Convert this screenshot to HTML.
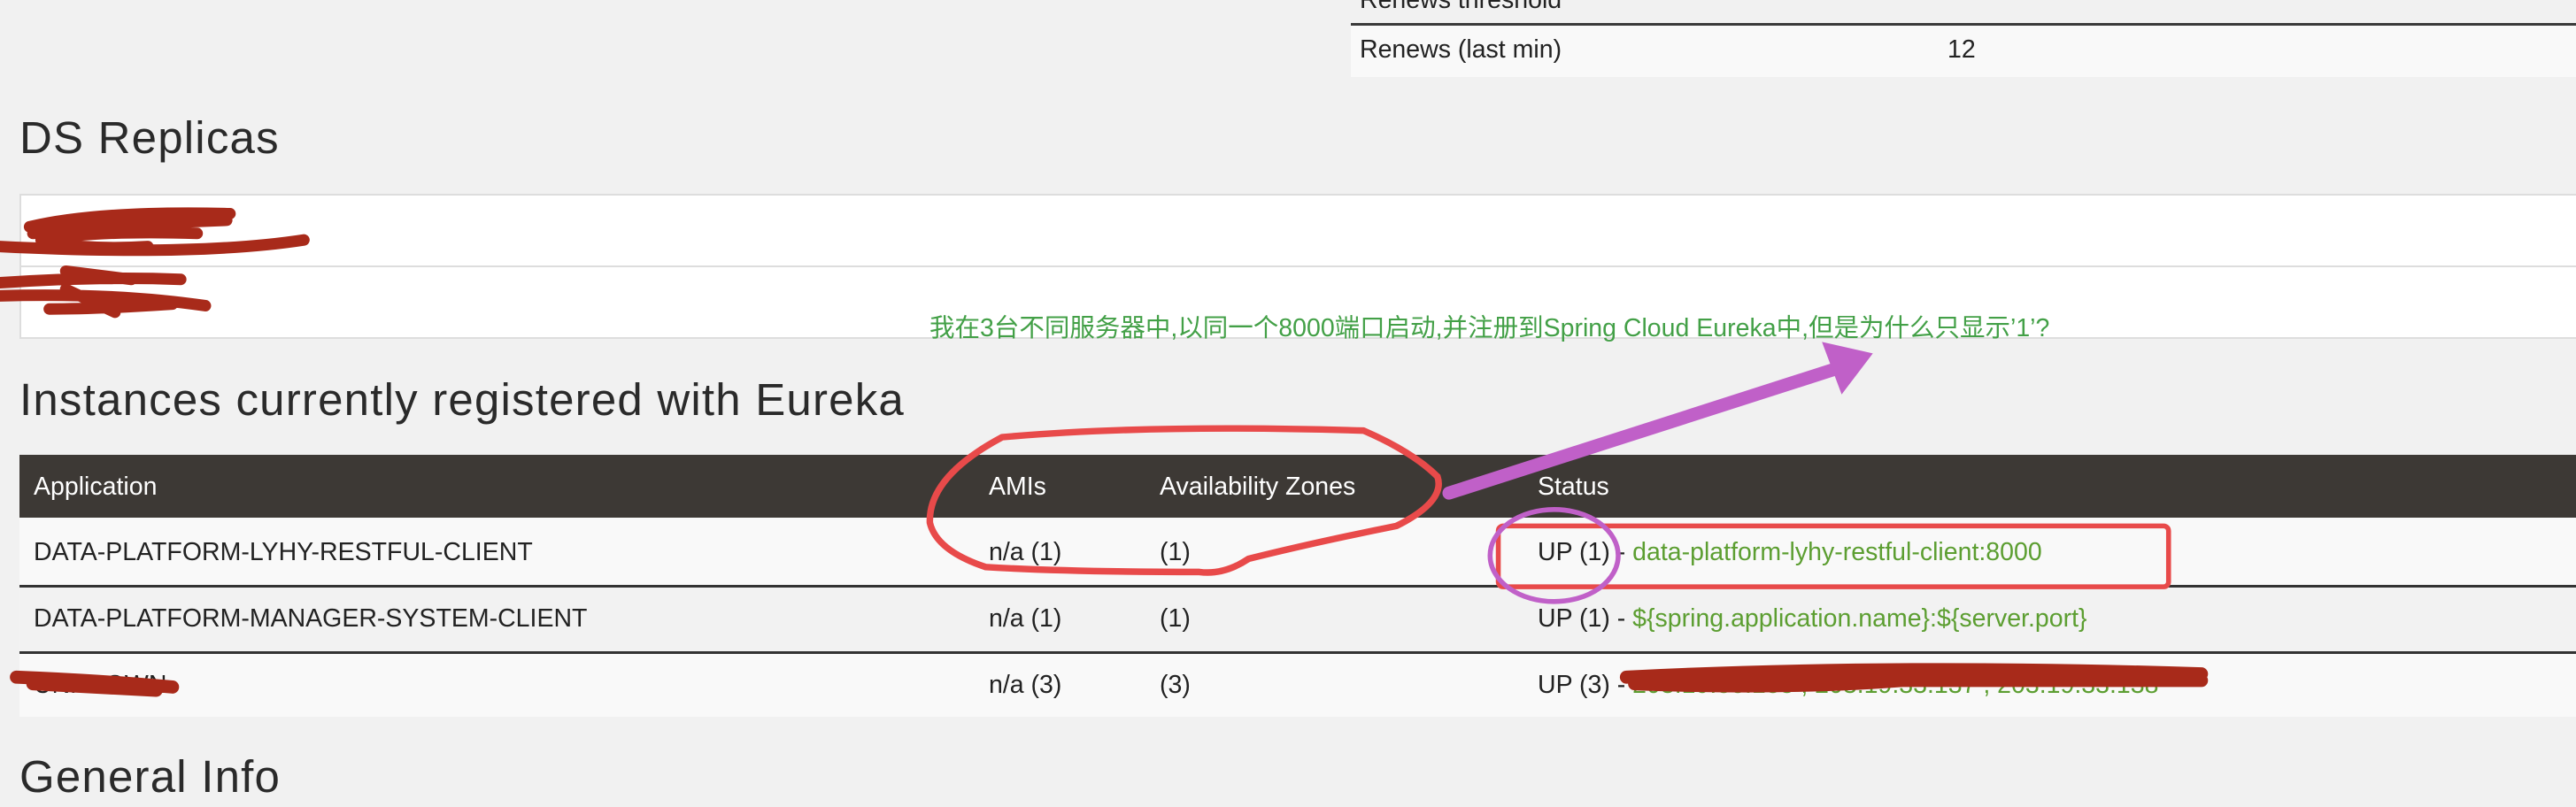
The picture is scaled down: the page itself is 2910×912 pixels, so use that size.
<!DOCTYPE html>
<html><head><meta charset="utf-8"><style>
html,body{margin:0;padding:0}
body{width:2910px;height:912px;background:#f1f1f1;position:relative;overflow:hidden;font-family:"Liberation Sans","Noto Sans CJK SC",sans-serif;color:#222}
.a{position:absolute;white-space:nowrap}
h{position:absolute;font-size:51px;letter-spacing:1.2px;color:#2a2a2a;white-space:nowrap}
.t{font-size:28.5px;line-height:28px}
.g{color:#5c9e31}
</style></head><body>
<div class="a" style="left:1526px;top:0;width:1384px;height:26px;border-bottom:3px solid #3a3a3a"></div>
<div class="a t" style="left:1536px;top:-14px">Renews threshold</div>
<div class="a" style="left:1526px;top:29px;width:1384px;height:58px;background:#f9f9f9"></div>
<div class="a t" style="left:1536px;top:42px">Renews (last min)</div>
<div class="a t" style="left:2200px;top:42px">12</div>

<h style="left:22px;top:126px">DS Replicas</h>
<div class="a" style="left:22px;top:219px;width:2890px;height:160px;background:#fff;border:2px solid #ddd;border-right:none"></div>
<div class="a" style="left:22px;top:300px;width:2890px;height:2px;background:#ddd"></div>
<div class="a" style="left:1050px;top:348px;font-size:28.5px;color:#43a047">我在3台不同服务器中,以同一个8000端口启动,并注册到Spring Cloud Eureka中,但是为什么只显示’1’?</div>

<h style="left:22px;top:422px">Instances currently registered with Eureka</h>
<div class="a" style="left:22px;top:514px;width:2890px;height:71px;background:#3d3935"></div>
<div class="a t" style="left:38px;top:536px;color:#fff">Application</div>
<div class="a t" style="left:1117px;top:536px;color:#fff">AMIs</div>
<div class="a t" style="left:1310px;top:536px;color:#fff">Availability Zones</div>
<div class="a t" style="left:1737px;top:536px;color:#fff">Status</div>

<div class="a" style="left:22px;top:585px;width:2890px;height:76px;background:#f9f9f9;border-bottom:3px solid #333"></div>
<div class="a t" style="left:38px;top:610px">DATA-PLATFORM-LYHY-RESTFUL-CLIENT</div>
<div class="a t" style="left:1117px;top:610px">n/a (1)</div>
<div class="a t" style="left:1310px;top:610px">(1)</div>
<div class="a t" style="left:1737px;top:610px">UP (1) - <span class="g">data-platform-lyhy-restful-client:8000</span></div>

<div class="a" style="left:22px;top:664px;width:2890px;height:72px;background:#f2f2f2;border-bottom:3px solid #333"></div>
<div class="a t" style="left:38px;top:685px">DATA-PLATFORM-MANAGER-SYSTEM-CLIENT</div>
<div class="a t" style="left:1117px;top:685px">n/a (1)</div>
<div class="a t" style="left:1310px;top:685px">(1)</div>
<div class="a t" style="left:1737px;top:685px">UP (1) - <span class="g">${spring.application.name}:${server.port}</span></div>

<div class="a" style="left:22px;top:739px;width:2890px;height:71px;background:#f9f9f9"></div>
<div class="a t" style="left:38px;top:760px">UNKNOWN</div>
<div class="a t" style="left:1117px;top:760px">n/a (3)</div>
<div class="a t" style="left:1310px;top:760px">(3)</div>
<div class="a t" style="left:1737px;top:760px">UP (3) - <span class="g">203.19.33.133 , 203.19.33.137 , 203.19.33.138</span></div>

<h style="left:22px;top:848px">General Info</h>

<svg class="a" style="left:0;top:0" width="2910" height="912" viewBox="0 0 1568 491" preserveAspectRatio="none">
<g fill="none" stroke-linecap="round">
<path d="M18 138 Q60 128 140 130 M20 142 Q80 136 138 134 M25 146 Q60 140 120 142 M0 150 Q120 156 185 146 M30 148 Q60 152 90 150" stroke="#a82a1a" stroke-width="7"/>
<path d="M40 165 L80 170 M0 172 Q60 168 110 170 M0 180 Q70 178 125 186 M30 188 Q60 188 105 185 M40 176 L70 190" stroke="#a82a1a" stroke-width="7"/>
<path d="M10 412 Q60 414 105 418 M20 416 L95 420" stroke="#a82a1a" stroke-width="8"/>
<path d="M990 412 Q1150 404 1340 410 M995 416 Q1100 420 1180 412 M1000 414 L1340 414" stroke="#a82a1a" stroke-width="8"/>
<path d="M610 266 Q700 258 830 262 Q860 275 875 290 Q880 305 850 320 Q800 330 760 340 Q745 350 730 348 Q650 348 600 345 Q570 335 566 318 Q565 290 610 266 Z" stroke="#e84a4a" stroke-width="4"/>
<rect x="912" y="320" width="408" height="37" rx="3" stroke="#e84a4a" stroke-width="3"/>
<ellipse cx="946" cy="338" rx="39" ry="28" stroke="#c060c8" stroke-width="3"/>
<path d="M882 300 L1125 222" stroke="#c060c8" stroke-width="8"/>
</g>
<polygon points="1140,215 1109,208 1121,240" fill="#c060c8"/>
</svg>
</body></html>
